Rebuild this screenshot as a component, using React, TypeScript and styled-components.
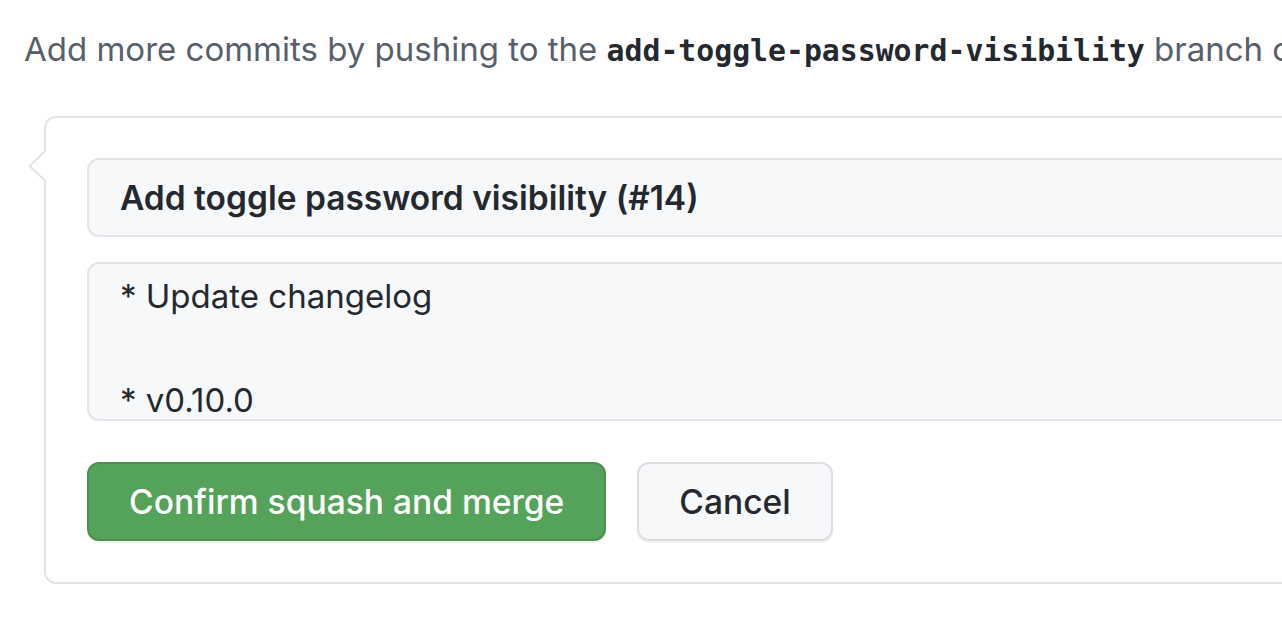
import styled, { createGlobalStyle } from "styled-components";

const GlobalStyle = createGlobalStyle`
  html, body {
    margin: 0;
    padding: 0;
    background: #ffffff;
    overflow: hidden;
  }
  body {
    font-family: Inter, "Liberation Sans", Arial, sans-serif;
  }
`;

const App = () => {
  return (
    <Page>
      <GlobalStyle />
      <Hint>
        Add more commits by pushing to the{" "}
        <BranchName>add-toggle-password-visibility</BranchName> branch on
        octocat/password-field.
      </Hint>
      <MergeBox>
        <TitleInput readOnly value="Add toggle password visibility (#14)" />
        <MessageArea
          readOnly
          value={"* Update changelog\n\n* v0.10.0"}
        />
        <Actions>
          <Button $primary>Confirm squash and merge</Button>
          <Button>Cancel</Button>
        </Actions>
      </MergeBox>
    </Page>
  );
};

export default App;

const Page = styled.div`
  width: 1282px;
  height: 618px;
  overflow: hidden;
  padding: 27px 0 0 24px;
  box-sizing: border-box;
`;

const Hint = styled.p`
  margin: 0;
  height: 44px;
  font-size: 33px;
  line-height: 44px;
  color: #57606a;
  white-space: nowrap;
`;

const BranchName = styled.code`
  font-family: "DejaVu Sans Mono", "Liberation Mono", monospace;
  font-weight: 700;
  font-size: 29.8px;
  line-height: 1;
  color: #24292f;
`;

const MergeBox = styled.div`
  position: relative;
  margin: 45px 0 0 20px;
  width: 1500px;
  box-sizing: border-box;
  padding: 40px 41px 41px;
  border: 2px solid #e1e4e8;
  border-radius: 12px;
  background: #ffffff;
  display: flex;
  flex-direction: column;

  &::before,
  &::after {
    content: "";
    position: absolute;
    top: 31px;
    width: 0;
    height: 0;
    border-style: solid;
    border-color: transparent;
  }
  &::before {
    left: -18px;
    border-width: 17px 18px 17px 0;
    border-right-color: #e1e4e8;
  }
  &::after {
    left: -15px;
    border-width: 17px 18px 17px 0;
    border-right-color: #ffffff;
  }
`;

const fieldBase = `
  box-sizing: border-box;
  width: 100%;
  border: 2px solid #e1e4e8;
  border-radius: 12px;
  background: #f6f8fa;
  color: #24292f;
  font-family: Inter, "Liberation Sans", Arial, sans-serif;
  outline: none;
`;

const TitleInput = styled.input`
  ${fieldBase}
  height: 79px;
  padding: 0 31px;
  font-size: 33.5px;
  font-weight: 600;
`;

const MessageArea = styled.textarea`
  ${fieldBase}
  margin-top: 25px;
  height: 159px;
  padding: 6px 31px 0;
  font-size: 33px;
  line-height: 52px;
  resize: none;
  overflow: hidden;
`;

const Actions = styled.div`
  display: flex;
  gap: 31px;
  margin-top: 41px;
`;

const Button = styled.button<{ $primary?: boolean }>`
  box-sizing: border-box;
  height: 79px;
  padding: 0 40px;
  border-radius: 12px;
  font-family: Inter, "Liberation Sans", Arial, sans-serif;
  font-size: 33.6px;
  font-weight: 500;
  cursor: pointer;
  border: 2px solid ${(p) => (p.$primary ? "#4a914f" : "#dcdee1")};
  background: ${(p) => (p.$primary ? "#55a35a" : "#f6f8fa")};
  color: ${(p) => (p.$primary ? "#ffffff" : "#24292f")};
  box-shadow: 0 2px 0 rgba(27, 31, 36, 0.06);
`;
